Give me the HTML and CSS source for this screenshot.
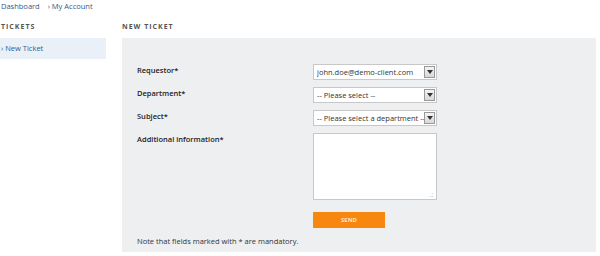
FILE: index.html
```html
<!DOCTYPE html>
<html lang="en">
<head>
    <meta charset="UTF-8">
    <title>New Ticket</title>
    <link rel="stylesheet" href="styles.css">
</head>
<body>
    <div class="crumbs">
        <a href="#">Dashboard</a>
        <a href="#" class="sub">&rsaquo; My Account</a>
    </div>

    <div class="layout">
        <div class="sidebar">
            <h2>Tickets</h2>
            <ul class="side-nav">
                <li><a href="#">&rsaquo; New Ticket</a></li>
            </ul>
        </div>

        <div class="main">
            <h2>New Ticket</h2>
            <form class="panel">
                <div class="row">
                    <label>Requestor*</label>
                    <div class="select">
                        <span class="value">john.doe@demo-client.com</span>
                        <span class="arrow"><svg width="6" height="4" viewBox="0 0 6 4"><path d="M0 0h6L3 4z" fill="#333"/></svg></span>
                    </div>
                </div>
                <div class="row">
                    <label>Department*</label>
                    <div class="select">
                        <span class="value">-- Please select --</span>
                        <span class="arrow"><svg width="6" height="4" viewBox="0 0 6 4"><path d="M0 0h6L3 4z" fill="#333"/></svg></span>
                    </div>
                </div>
                <div class="row">
                    <label>Subject*</label>
                    <div class="select">
                        <span class="value">-- Please select a department --</span>
                        <span class="arrow"><svg width="6" height="4" viewBox="0 0 6 4"><path d="M0 0h6L3 4z" fill="#333"/></svg></span>
                    </div>
                </div>
                <div class="row">
                    <label>Additional information*</label>
                    <div class="textbox">
                        <textarea></textarea>
                        <span class="grip">.:</span>
                    </div>
                </div>
                <div class="row actions">
                    <span></span>
                    <button type="button">SEND</button>
                </div>
                <p class="note">Note that fields marked with * are mandatory.</p>
            </form>
        </div>
    </div>
</body>
</html>
```

FILE: styles.css
```css
body {
    margin: 0;
    font-family: "Open Sans", "Liberation Sans", sans-serif;
    font-size: 7.5px;
    color: #333;
    background: #fff;
}
a {
    color: #35598a;
    text-decoration: none;
}
.crumbs {
    height: 12px;
    line-height: 12px;
    padding-left: 1px;
}
.crumbs .sub {
    margin-left: 6px;
}
.layout {
    display: flex;
    gap: 16px;
    margin-top: 8px;
    padding-right: 4px;
}
h2 {
    margin: 0;
    height: 18px;
    line-height: 14px;
    font-size: 7px;
    font-weight: bold;
    letter-spacing: 1px;
    text-transform: uppercase;
    color: #555;
}
.sidebar {
    width: 106px;
}
.sidebar h2 {
    padding-left: 1px;
}
.side-nav {
    list-style: none;
    margin: 0;
    padding: 0;
}
.side-nav li {
    background: #eaf0f7;
    height: 21px;
    line-height: 21px;
    padding-left: 1px;
}
.main {
    flex: 1;
}
.panel {
    background: #eeeff1;
    padding: 26px 15px 6px;
    height: 214px;
    box-sizing: border-box;
}
.row {
    display: grid;
    grid-template-columns: 176px 124px;
    margin-bottom: 7px;
}
.row label {
    font-weight: 600;
    line-height: 12px;
    color: #222;
}
.select {
    display: flex;
    align-items: center;
    height: 16px;
    box-sizing: border-box;
    background: #fff;
    border: 1px solid #c8c8c8;
    padding: 0 1px 0 3px;
}
.select .value {
    flex: 1;
    white-space: nowrap;
    overflow: hidden;
}
.select .arrow {
    display: flex;
    align-items: center;
    justify-content: center;
    width: 11px;
    height: 12px;
    box-sizing: border-box;
    border: 1px solid #999;
    background: linear-gradient(#f4f4f4, #d8d8d8);
}
.textbox {
    position: relative;
    height: 67px;
}
textarea {
    display: block;
    width: 124px;
    height: 67px;
    box-sizing: border-box;
    border: 1px solid #c8c8c8;
    background: #fff;
    resize: none;
    margin: 0;
}
.grip {
    position: absolute;
    right: 4px;
    bottom: 2px;
    font-size: 7px;
    line-height: 7px;
    color: #aaa;
}
.actions {
    margin-top: 12px;
}
button {
    width: 72px;
    height: 16px;
    border: none;
    background: #f7870f;
    color: #fde3c4;
    font-family: inherit;
    font-size: 6px;
    font-weight: bold;
    cursor: pointer;
}
.note {
    margin: 0;
    line-height: 12px;
}
```
